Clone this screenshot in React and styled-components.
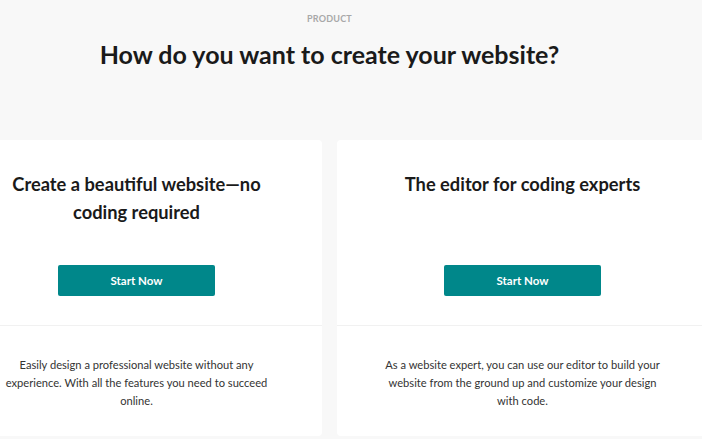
import React from 'react';
import styled, { createGlobalStyle } from 'styled-components';

const GlobalStyle = createGlobalStyle`
  html, body {
    margin: 0;
    padding: 0;
    background: #f8f8f8;
    font-family: Lato, "Open Sans", Arial, sans-serif;
    overflow: hidden;
  }
`;

const Page = styled.div`
  width: 757px;
  margin-left: -49px;
`;

const Header = styled.header`
  height: 140px;
  display: flex;
  flex-direction: column;
  align-items: center;
`;

const Eyebrow = styled.div`
  margin-top: 13px;
  font-size: 9px;
  font-weight: 700;
  letter-spacing: 0.2px;
  color: #a8a8a8;
  text-transform: uppercase;
`;

const Title = styled.h1`
  margin: 15px 0 0;
  font-size: 25px;
  font-weight: 700;
  color: #1a1a1a;
`;

const Cards = styled.div`
  display: grid;
  grid-template-columns: 371px 371px;
  gap: 15px;
`;

const Card = styled.section`
  background: #fff;
  border-radius: 4px;
  height: 296px;
  display: flex;
  flex-direction: column;
`;

const CardTop = styled.div`
  height: 186px;
  box-sizing: border-box;
  padding: 30px 40px 29px;
  display: flex;
  flex-direction: column;
  align-items: center;
  border-bottom: 1px solid #f1f1f1;
`;

const CardTitle = styled.h2`
  margin: 0;
  font-size: 18.3px;
  line-height: 28px;
  font-weight: 700;
  color: #1a1a1a;
  text-align: center;
`;

const Button = styled.button`
  margin-top: auto;
  width: 157px;
  height: 31px;
  border: none;
  border-radius: 2px;
  background: #00878a;
  color: #fff;
  font-family: inherit;
  font-size: 11.5px;
  font-weight: 700;
  cursor: pointer;
`;

const CardBody = styled.p`
  margin: 0;
  padding: 30px 45px 0;
  font-size: 11.15px;
  line-height: 18px;
  color: #333;
  text-align: center;
`;

const options = [
  {
    title: <>Create a beautiful website—no<br />coding required</>,
    text: 'Easily design a professional website without any experience. With all the features you need to succeed online.',
  },
  {
    title: 'The editor for coding experts',
    text: 'As a website expert, you can use our editor to build your website from the ground up and customize your design with code.',
  },
];

export default function App() {
  return (
    <>
      <GlobalStyle />
      <Page>
        <Header>
          <Eyebrow>Product</Eyebrow>
          <Title>How do you want to create your website?</Title>
        </Header>
        <Cards>
          {options.map((o, i) => (
            <Card key={i}>
              <CardTop>
                <CardTitle>{o.title}</CardTitle>
                <Button>Start Now</Button>
              </CardTop>
              <CardBody>{o.text}</CardBody>
            </Card>
          ))}
        </Cards>
      </Page>
    </>
  );
}
